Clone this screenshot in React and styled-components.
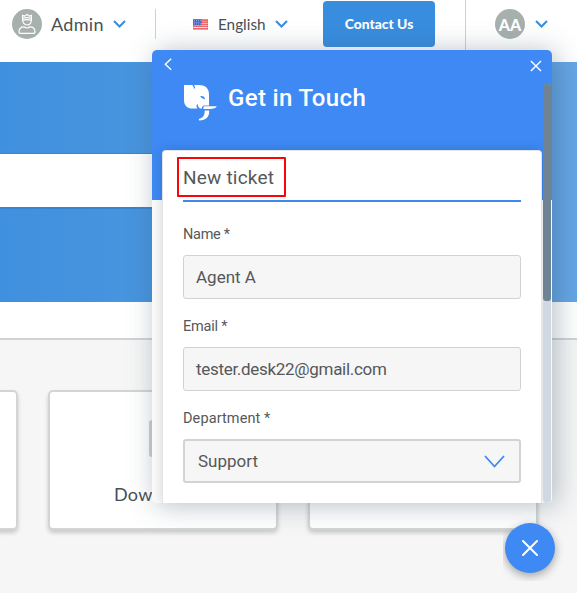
import React from "react";
import styled, { createGlobalStyle } from "styled-components";

const GlobalStyle = createGlobalStyle`
  * { box-sizing: border-box; }
  body {
    margin: 0;
    background: #f6f6f6;
    color: #4a4f55;
    font-family: Lato, "Liberation Sans", sans-serif;
    overflow: hidden;
  }
`;

const Page = styled.div`
  position: relative;
  width: 577px;
  height: 593px;
  overflow: hidden;
  background: #f6f6f6;
`;

/* ---------- Top bar ---------- */
const TopBar = styled.header`
  display: flex;
  align-items: flex-start;
  height: 62px;
  padding-left: 12px;
  background: #fff;
`;

const MenuButton = styled.div`
  display: flex;
  align-items: center;
  height: 30px;
  margin-top: 9px;
  width: ${(p) => p.$width}px;
  margin-left: ${(p) => p.$left || 0}px;
`;

const Avatar = styled.div`
  display: flex;
  flex: none;
  align-items: center;
  justify-content: center;
  width: 30px;
  height: 30px;
  border-radius: 50%;
  background: #a8b0ae;
  color: #fff;
  font-size: 16px;
  font-weight: 900;
`;

const MenuLabel = styled.span`
  width: ${(p) => p.$width}px;
  margin-left: ${(p) => p.$left}px;
  margin-right: ${(p) => 10 - p.$left}px;
  font-size: ${(p) => p.$size}px;
  line-height: 30px;
  letter-spacing: ${(p) => p.$spacing || 0}px;
  white-space: nowrap;
`;

const Chevron = styled.svg`
  flex: none;
  display: block;
  margin-left: 10px;
`;

const Divider = styled.div`
  width: 1px;
  height: ${(p) => p.$height}px;
  margin-top: ${(p) => p.$top || 0}px;
  background: #cdd1d3;
`;

const ContactButton = styled.button`
  width: 112px;
  height: 46px;
  margin: 1px 30px 0 35px;
  padding: 0;
  border: 0;
  border-radius: 4px;
  background: #398ddf;
  color: #fff;
  font: 900 13.9px/44px Lato, sans-serif;
`;

/* ---------- Page body ---------- */
const Hero = styled.section`
  height: 240px;
  padding-top: 91px;
  background: linear-gradient(90deg, #3f90de 0%, #4995df 27%, #65a6e6 100%);
`;

const SearchBox = styled.div`
  width: 420px;
  height: 56px;
  border: solid #3685d1;
  border-width: 1px 0 2px;
  background: #fff;
`;

const Strip = styled.div`
  height: 38px;
  border-bottom: 2px solid #cfd4d4;
  background: #fff;
`;

const Cards = styled.section`
  display: flex;
  gap: 30px;
  margin: 50px 0 0 -212px;
`;

const Card = styled.article`
  display: flex;
  flex: none;
  flex-direction: column;
  align-items: center;
  width: 230px;
  height: 140px;
  padding-top: 28px;
  border: 2px solid #d1d6d5;
  border-radius: 5px;
  background: #fff;
  box-shadow: 0 3px 4px rgba(0, 0, 0, 0.18);
`;

const CardGlyph = styled.div`
  width: 29px;
  height: 37px;
  border-radius: 3px;
  background: #cdd1d4;
`;

const CardTitle = styled.div`
  width: 98px;
  margin-top: 24px;
  font-size: 18px;
  line-height: 26px;
  letter-spacing: 0.3px;
  white-space: nowrap;
`;

/* ---------- Chat widget ---------- */
const Widget = styled.aside`
  position: absolute;
  left: 152px;
  top: 50px;
  display: flex;
  width: 400px;
  height: 453px;
  overflow: hidden;
  border-radius: 5px;
  background: linear-gradient(#3e89f3 150px, #fafafa 150px);
  font-family: Roboto, "Liberation Sans", sans-serif;
  color: #55585a;
`;

const WidgetShadow = styled.div`
  position: absolute;
  left: 152px;
  top: 50px;
  width: 400px;
  height: 453px;
  border-radius: 5px;
  box-shadow: 4px 2px 28px rgba(50, 75, 95, 0.36);
`;

const Content = styled.div`
  width: 391px;
  padding-left: 10px;
`;

const Banner = styled.div`
  display: flex;
  flex-direction: column;
  height: 100px;
  color: #fff;
`;

const Nav = styled.div`
  display: flex;
  justify-content: space-between;
  padding: 8px 0 0 2px;
  height: 31px;
`;

const Brand = styled.div`
  display: flex;
  align-items: center;
  height: 42px;
  padding-left: 20px;
  gap: 10px;
`;

const BrandTitle = styled.h1`
  margin: -9px 0 0;
  font-size: 24px;
  font-weight: 500;
  letter-spacing: 0.35px;
`;

const Form = styled.form`
  width: 380px;
  height: 353px;
  padding: 0 20px;
  border: 1px solid #e2e4e6;
  border-bottom: 0;
  border-radius: 4px 4px 0 0;
  background: #fff;
  box-shadow: 0 0 12px rgba(0, 0, 0, 0.15);
`;

const FormTitle = styled.h2`
  height: 51px;
  margin: 0;
  border-bottom: 2px solid #3f88ed;
  font-size: 19px;
  font-weight: 400;
  line-height: 53px;
  letter-spacing: ${(p) => p.$spacing}px;
`;

const Field = styled.div`
  height: 92px;
  padding-top: 23px;
`;

const Label = styled.label`
  display: block;
  height: 30px;
  font-size: 14.5px;
  line-height: 20px;
  letter-spacing: ${(p) => p.$spacing || 0}px;
`;

const Control = styled.div`
  display: flex;
  align-items: center;
  justify-content: space-between;
  height: 44px;
  padding: ${(p) => (p.$select ? "0 14px 0 13px" : "0 12px")};
  border: ${(p) => (p.$select ? "2px solid #cfd5d4" : "1px solid #d0d3d4")};
  border-radius: 3px;
  background: #f6f6f6;
  font-size: 17px;
  letter-spacing: ${(p) => p.$spacing || 0}px;
`;

const Track = styled.div`
  width: 8px;
  height: 419px;
  margin-top: 34px;
  border-radius: 4px;
  background: #d0d9e1;
`;

const Thumb = styled.div`
  height: 217px;
  border-radius: 3px;
  background: #6e8393;
`;

const Highlight = styled.div`
  position: absolute;
  left: 177px;
  top: 157px;
  width: 109px;
  height: 40px;
  border: 2px solid #fa0505;
  border-radius: 1px;
`;

const LauncherArea = styled.div`
  position: absolute;
  left: 503px;
  top: 515px;
  width: 62px;
  height: 66px;
  padding: 8px 0 0 2px;
  overflow: hidden;
`;

const Launcher = styled.div`
  display: flex;
  align-items: center;
  justify-content: center;
  width: 50px;
  height: 50px;
  border-radius: 50%;
  background: #3e89f3;
  box-shadow: 0 3px 10px rgba(0, 0, 0, 0.35);
`;

function Down({ width = 13, height = 8, stroke = 2, color = "#398ddf" }) {
  return (
    <Chevron width={width} height={height} fill="none" stroke={color} strokeWidth={stroke}>
      <path d={`M1 1 L${width / 2} ${height - 1.5} L${width - 1} 1`} />
    </Chevron>
  );
}

function Cross({ size, stroke }) {
  return (
    <svg width={size} height={size} fill="none" stroke="#fff" strokeWidth={stroke} strokeLinecap="round">
      <path d={`M1 1 L${size - 1} ${size - 1} M${size - 1} 1 L1 ${size - 1}`} />
    </svg>
  );
}

function AdminIcon() {
  return (
    <svg width="20" height="22" viewBox="0 0 20 22" fill="none" stroke="#fff" strokeWidth="1.2" strokeLinejoin="round">
      <path d="M5.6 6.5V2.2L7.5 3.2L10 1.4L12.5 3.2L14.4 2.2V6.5C14.4 9.8 12.6 12 10 12S5.6 9.8 5.6 6.5Z" />
      <path d="M5.8 5.2Q10 3.9 14.2 5.2M5.8 7.2Q10 6 14.2 7.2" />
      <path d="M7 13.8Q10 16.2 13 13.8C16.5 13.8 18 16 18 19Q18 20.4 16.8 20.4H3.2Q2 20.4 2 19C2 16 3.5 13.8 7 13.8Z" />
    </svg>
  );
}

function Flag() {
  return (
    <svg width="16" height="11" viewBox="0 0 16 11">
      <rect width="16" height="11" fill="#f7e4e4" />
      <path d="M0 .8H16M0 3H16M0 5.2H16M0 7.4H16M0 10H16" stroke="#ee4144" strokeWidth="1.2" />
      <rect width="9" height="6.4" fill="#3d62c9" />
      <path d="M1 1.5H8.5M1.5 3.2H8M1 4.9H8.5" stroke="#cfdcfa" strokeWidth=".8" strokeDasharray="1 1.2" />
      <rect x=".4" y=".4" width="15.2" height="10.2" fill="none" stroke="#a86a78" strokeOpacity=".45" strokeWidth=".8" />
    </svg>
  );
}

function Elephant() {
  return (
    <svg width="36" height="38" viewBox="0 0 36 38">
      <path
        fill="#fff"
        d="M2 2H10.2C11.4 3.2 11.8 4.1 11.8 5.6L13 5.5C13.2 4.2 12.7 3 12 2H16.8C23 2 27 5.2 27 11.2V22.5H22.5C20.8 22.5 19.8 23.5 20 25.5H18.2C16.6 24.7 15.9 23 15.4 20.8C14 22.4 14.4 24.3 15.5 25.6H10.5C5 25.6 2 22.4 2 17Z"
      />
      <path fill="#3e89f3" d="M18 13.8C19.5 12.3 22.4 13 23.1 16.1C21 16.5 20 14.8 18 13.8Z" />
      <path fill="#fff" d="M22.4 23.3H34.8C34 25 31.6 26 27.5 26H21.6C21 24.8 21.4 23.7 22.4 23.3Z" />
      <path fill="#fff" d="M22.7 27.4H27.2C27.6 33.4 24.2 37.2 17.2 37.5L16.8 36.1C21.4 34.6 22.7 32 22.7 27.4Z" />
    </svg>
  );
}

export default function App() {
  return (
    <>
      <GlobalStyle />
      <Page>
        <TopBar>
          <MenuButton $width={143}>
            <Avatar><AdminIcon /></Avatar>
            <MenuLabel $width={51} $left={9} $size={18} $spacing={0.3}>Admin</MenuLabel>
            <Down />
          </MenuButton>
          <Divider $height={30} $top={9} />
          <MenuButton $width={95} $left={37}>
            <Flag />
            <MenuLabel $width={47} $left={10} $size={15.3}>English</MenuLabel>
            <Down />
          </MenuButton>
          <ContactButton>Contact Us</ContactButton>
          <Divider $height={50} />
          <MenuButton $width={55} $left={29}>
            <Avatar>AA</Avatar>
            <Down />
          </MenuButton>
        </TopBar>
        <Hero><SearchBox /></Hero>
        <Strip />
        <Cards>
          <Card />
          <Card><CardGlyph /><CardTitle>Downloads</CardTitle></Card>
          <Card />
        </Cards>

        <WidgetShadow />
        <Widget>
          <Content>
            <Banner>
              <Nav>
                <svg width="9" height="13" fill="none" stroke="#fff" strokeWidth="1.4">
                  <path d="M7.2 .8L1.3 6.3L7.2 11.8" />
                </svg>
                <svg width="13" height="18" fill="none" stroke="#fff" strokeWidth="1.4">
                  <path d="M.9 3L11 13.1M11 3L.9 13.1" />
                </svg>
              </Nav>
              <Brand><Elephant /><BrandTitle>Get in Touch</BrandTitle></Brand>
            </Banner>
            <Form>
              <FormTitle $spacing={0.2}>New ticket</FormTitle>
              <Field>
                <Label $spacing={-0.3}>Name *</Label>
                <Control>Agent A</Control>
              </Field>
              <Field>
                <Label $spacing={-0.2}>Email *</Label>
                <Control $spacing={-0.3}>tester.desk22@gmail.com</Control>
              </Field>
              <Field>
                <Label $spacing={0.1}>Department *</Label>
                <Control $select>Support<Down width={21} height={13} stroke={1.8} color="#3e89f3" /></Control>
              </Field>
            </Form>
          </Content>
          <Track><Thumb /></Track>
        </Widget>
        <Highlight />
        <LauncherArea><Launcher><Cross size={16} stroke={2} /></Launcher></LauncherArea>
      </Page>
    </>
  );
}
